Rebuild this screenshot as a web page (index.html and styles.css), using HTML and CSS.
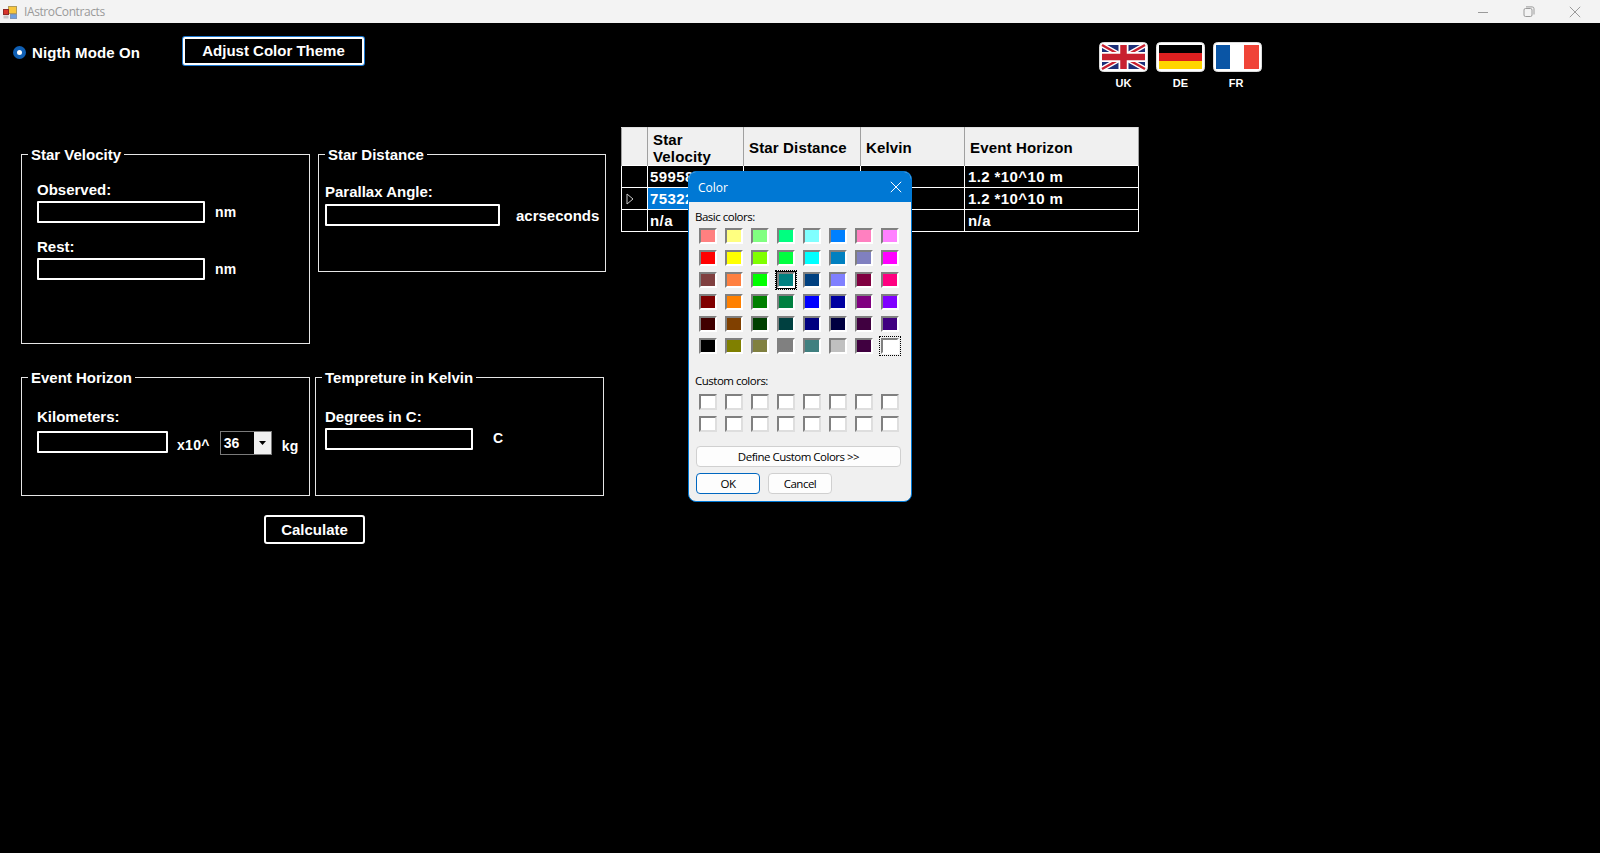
FILE: index.html
```html
<!DOCTYPE html>
<html lang="en">
<head>
<meta charset="utf-8">
<title>IAstroContracts</title>
<link rel="stylesheet" href="styles.css">
</head>
<body>
<div class="window">
  <header class="titlebar">
    <svg class="appicon" width="14" height="13" viewBox="0 0 14 13">
      <rect x="5.500" y="0.500" width="8" height="7" fill="#f7c63c" stroke="#b09a5a"/>
      <rect x="0.500" y="3.500" width="5" height="5" fill="#d8342b" stroke="#8f2a25"/>
      <rect x="7.500" y="8.500" width="6" height="4" fill="#6f9fe0" stroke="#7f96b8"/>
      <rect x="0.500" y="9.500" width="5" height="3" fill="#c8c8c8"/>
    </svg>
    <span class="apptitle">IAstroContracts</span>
    <div class="winctrls">
      <span class="winbtn"><svg width="12" height="12" viewBox="0 0 12 12"><path d="M1 6.500h10" stroke="#9a9a9a"/></svg></span>
      <span class="winbtn"><svg width="12" height="12" viewBox="0 0 12 12"><rect x="1" y="2.500" width="8" height="8" rx="1.500" fill="none" stroke="#9a9a9a"/><path d="M3 .9h6.200q1.800 0 1.800 1.800V8.500" fill="none" stroke="#9a9a9a"/></svg></span>
      <span class="winbtn"><svg width="12" height="12" viewBox="0 0 12 12"><path d="M.8.800l10.400 10.400M11.200.800L.8 11.200" stroke="#9a9a9a" fill="none"/></svg></span>
    </div>
  </header>

  <main class="client">
    <section class="left">
      <div class="toolbar">
        <label class="radio"><span class="radiodot"></span>Nigth Mode On</label>
        <button class="btn btn-theme" type="button">Adjust Color Theme</button>
      </div>

      <div class="grouprow row-a">
        <fieldset class="group g-velocity">
          <legend>Star Velocity</legend>
          <div class="fieldlabel">Observed:</div>
          <div class="fieldline"><span class="input w-168"></span><span class="unit u-nm">nm</span></div>
          <div class="fieldlabel second">Rest:</div>
          <div class="fieldline"><span class="input w-168"></span><span class="unit u-nm">nm</span></div>
        </fieldset>
        <fieldset class="group g-distance">
          <legend>Star Distance</legend>
          <div class="fieldlabel">Parallax Angle:</div>
          <div class="fieldline"><span class="input w-175"></span><span class="unit u-arc">acrseconds</span></div>
        </fieldset>
      </div>

      <div class="grouprow row-b">
        <fieldset class="group g-horizon">
          <legend>Event Horizon</legend>
          <div class="fieldlabel">Kilometers:</div>
          <div class="fieldline line-top"><span class="input w-131"></span><span class="unit u-x">x10^</span>
            <span class="combo"><span class="comboval">36</span><span class="comboarrow"><svg width="7" height="4" viewBox="0 0 7 4"><path d="M0 0h7L3.500 4z" fill="#000"/></svg></span></span>
            <span class="unit u-kg">kg</span></div>
        </fieldset>
        <fieldset class="group g-temp">
          <legend>Tempreture in Kelvin</legend>
          <div class="fieldlabel">Degrees in C:</div>
          <div class="fieldline"><span class="input w-148"></span><span class="unit u-c">C</span></div>
        </fieldset>
      </div>

      <div class="calcrow"><button class="btn btn-calc" type="button">Calculate</button></div>
    </section>

    <section class="right">
      <div class="flags">
        <figure class="flag">
          <svg class="flagimg" width="49" height="30" viewBox="0 0 49 30">
            <rect x=".5" y=".5" width="48" height="29" rx="4" fill="#fff" stroke="#ddd"/>
            <rect x="3" y="3" width="43" height="24" fill="#1d2f78"/>
            <path d="M3 3l43 24M46 3L3 27" stroke="#fff" stroke-width="5"/>
            <path d="M3 3l43 24M46 3L3 27" stroke="#c8202f" stroke-width="2.500"/>
            <path d="M24.500 3v24M3 15h43" stroke="#fff" stroke-width="10"/>
            <path d="M24.500 3v24M3 15h43" stroke="#c8202f" stroke-width="6.500"/>
          </svg>
          <figcaption>UK</figcaption>
        </figure>
        <figure class="flag">
          <svg class="flagimg" width="49" height="30" viewBox="0 0 49 30">
            <rect x=".5" y=".5" width="48" height="29" rx="4" fill="#fff" stroke="#ddd"/>
            <rect x="3" y="3" width="43" height="8" fill="#000"/>
            <rect x="3" y="11" width="43" height="8" fill="#dd2020"/>
            <rect x="3" y="19" width="43" height="8" fill="#ffd500"/>
          </svg>
          <figcaption>DE</figcaption>
        </figure>
        <figure class="flag">
          <svg class="flagimg" width="49" height="30" viewBox="0 0 49 30">
            <rect x=".5" y=".5" width="48" height="29" rx="4" fill="#fff" stroke="#ddd"/>
            <rect x="3" y="3" width="14" height="24" fill="#0a55a5"/>
            <rect x="31" y="3" width="15" height="24" fill="#f04438"/>
          </svg>
          <figcaption>FR</figcaption>
        </figure>
      </div>

      <table class="grid">
        <colgroup><col class="c0"><col class="c1"><col class="c2"><col class="c3"><col class="c4"></colgroup>
        <thead>
          <tr class="headrow"><th></th><th>Star Velocity</th><th>Star Distance</th><th>Kelvin</th><th>Event Horizon</th></tr>
        </thead>
        <tbody>
          <tr><td class="rowhead"></td><td>59958</td><td></td><td></td><td>1.2 *10^10 m</td></tr>
          <tr><td class="rowhead"><svg class="rowarrow" width="8" height="12" viewBox="0 0 8 12"><path d="M1 1l6 5-6 5z" fill="none" stroke="#c8c8c8"/></svg></td><td class="selected">75322</td><td></td><td></td><td>1.2 *10^10 m</td></tr>
          <tr><td class="rowhead"></td><td>n/a</td><td></td><td></td><td>n/a</td></tr>
        </tbody>
      </table>
    </section>
  </main>

  <div class="dialog">
    <div class="dlgtitle"><span>Color</span>
      <svg width="12" height="12" viewBox="0 0 12 12"><path d="M.8.800l10.400 10.400M11.200.800L.8 11.200" stroke="#fff" fill="none"/></svg>
    </div>
    <div class="dlgbody">
      <div class="dlglabel">Basic colors:</div>
      <div class="swatches">
        <span class="sw c-ff8080"></span><span class="sw c-ffff80"></span><span class="sw c-80ff80"></span><span class="sw c-00ff80"></span><span class="sw c-80ffff"></span><span class="sw c-0080ff"></span><span class="sw c-ff80c0"></span><span class="sw c-ff80ff"></span>
        <span class="sw c-ff0000"></span><span class="sw c-ffff00"></span><span class="sw c-80ff00"></span><span class="sw c-00ff40"></span><span class="sw c-00ffff"></span><span class="sw c-0080c0"></span><span class="sw c-8080c0"></span><span class="sw c-ff00ff"></span>
        <span class="sw c-804040"></span><span class="sw c-ff8040"></span><span class="sw c-00ff00"></span><span class="sw c-008080 sw-current"></span><span class="sw c-004080"></span><span class="sw c-8080ff"></span><span class="sw c-800040"></span><span class="sw c-ff0080"></span>
        <span class="sw c-800000"></span><span class="sw c-ff8000"></span><span class="sw c-008000"></span><span class="sw c-008040"></span><span class="sw c-0000ff"></span><span class="sw c-0000a0"></span><span class="sw c-800080"></span><span class="sw c-8000ff"></span>
        <span class="sw c-400000"></span><span class="sw c-804000"></span><span class="sw c-004000"></span><span class="sw c-004040"></span><span class="sw c-000080"></span><span class="sw c-000040"></span><span class="sw c-400040"></span><span class="sw c-400080"></span>
        <span class="sw c-000000"></span><span class="sw c-808000"></span><span class="sw c-808040"></span><span class="sw c-808080"></span><span class="sw c-408080"></span><span class="sw c-c0c0c0"></span><span class="sw c-400040"></span><span class="sw c-ffffff sw-focus"></span>
      </div>
      <div class="dlglabel custom">Custom colors:</div>
      <div class="swatches">
        <span class="sw sw-empty"></span><span class="sw sw-empty"></span><span class="sw sw-empty"></span><span class="sw sw-empty"></span><span class="sw sw-empty"></span><span class="sw sw-empty"></span><span class="sw sw-empty"></span><span class="sw sw-empty"></span>
        <span class="sw sw-empty"></span><span class="sw sw-empty"></span><span class="sw sw-empty"></span><span class="sw sw-empty"></span><span class="sw sw-empty"></span><span class="sw sw-empty"></span><span class="sw sw-empty"></span><span class="sw sw-empty"></span>
      </div>
      <button class="dlgbtn define" type="button">Define Custom Colors &gt;&gt;</button>
      <div class="dlgactions">
        <button class="dlgbtn ok" type="button">OK</button>
        <button class="dlgbtn cancel" type="button">Cancel</button>
      </div>
    </div>
  </div>
</div>
</body>
</html>
```
FILE: styles.css
```css
* { box-sizing: border-box; }
html, body { margin: 0; height: 100%; background: #000; overflow: hidden; }
body { font-family: "Liberation Sans", Arial, sans-serif; color: #fff; }
.window { position: relative; height: 853px; display: flex; flex-direction: column; }

.titlebar { height: 23px; background: #f3f3f3; display: flex; align-items: center; padding: 0 2px 0 3px; flex: none; }
.appicon { flex: none; margin-top: 1px; }
.apptitle { font: 12px "Open Sans", sans-serif; letter-spacing: -.4px; color: #9a9a9a; margin-left: 7px; }
.winctrls { margin-left: auto; display: flex; }
.winbtn { width: 46px; height: 23px; display: flex; align-items: center; justify-content: center; }

.client { display: flex; flex: 1; font-weight: 700; font-size: 15px; }
.left { width: 621px; flex: none; padding-left: 13px; }
.right { flex: 1; }

.toolbar { display: flex; align-items: center; height: 28px; margin-top: 14px; }
.radio { display: flex; align-items: center; width: 170px; font-size: 15px; letter-spacing: .1px; padding-top: 2px; }
.radiodot { width: 13px; height: 13px; border-radius: 50%; background: #fff; border: 4px solid #0f5fb4; margin-right: 6px; flex: none; }
.btn { background: #000; color: #fff; font: 700 15px "Liberation Sans", Arial, sans-serif; border-radius: 2px; padding: 0; }
.btn-theme { width: 181px; height: 28px; border: 2px solid #fff; box-shadow: 0 0 0 1px #1b78d0; padding-bottom: 2px; }

.grouprow { display: flex; align-items: flex-start; margin-left: 8px; }
.row-a { margin-top: 80px; gap: 8px; }
.row-b { margin-top: 24px; gap: 5px; }
.group { margin: 0; border: 1px solid #e6e6e6; padding: 0; min-width: 0; font-size: 15px; }
.group legend { margin-left: 6px; padding: 2px 3px 0; font-size: 15px; line-height: 16px; font-weight: 700; }
.fieldlabel, .fieldline { margin-left: 15px; }
.g-velocity { width: 289px; height: 199px; padding-top: 19px; }
.g-distance { width: 288px; height: 127px; padding-top: 21px; }
.g-horizon { width: 289px; height: 128px; padding-top: 23px; }
.g-temp { width: 289px; height: 128px; padding-top: 23px; }
.g-distance .fieldlabel, .g-distance .fieldline { margin-left: 6px; }
.g-temp .fieldlabel, .g-temp .fieldline { margin-left: 9px; }

.fieldlabel { line-height: 16px; height: 16px; }
.fieldlabel.second { margin-top: 16px; }
.fieldline { display: flex; align-items: center; margin-top: 3px; }
.g-distance .fieldline { margin-top: 4px; }
.g-temp .fieldline { margin-top: 3px; }
.fieldline.line-top { align-items: flex-start; margin-top: 6px; }
.input { display: block; height: 22px; border: 2px solid #fff; border-radius: 1px; flex: none; }
.w-168 { width: 168px; }
.w-175 { width: 175px; }
.w-131 { width: 131px; }
.w-148 { width: 148px; }
.unit { font-size: 14px; line-height: 16px; letter-spacing: .2px; }
.u-nm { margin-left: 10px; }
.u-arc { margin-left: 16px; font-size: 15px; letter-spacing: 0; padding-top: 2px; }
.u-x { margin-left: 9px; letter-spacing: .3px; padding-top: 6px; }
.u-kg { margin-left: 10px; padding-top: 7px; }
.u-c { margin-left: 20px; padding-bottom: 2px; }
.combo { margin-left: 10px; width: 52px; height: 24px; border: 1px solid #7a7a7a; display: flex; }
.comboval { flex: 1; font-size: 14px; font-weight: 700; padding-left: 3px; line-height: 22px; }
.comboarrow { width: 17px; background: #f0f0f0; display: flex; align-items: center; justify-content: center; }

.calcrow { margin: 19px 0 0 251px; }
.btn-calc { width: 101px; height: 29px; border: 2px solid #fff; border-radius: 3px; }

.flags { display: flex; gap: 8px; padding: 19px 0 0 478px; height: 104px; }
.flag { margin: 0; width: 49px; text-align: center; }
.flag:last-child figcaption { padding-right: 3px; }
.flagimg { display: block; }
figcaption { font-size: 11px; line-height: 13px; margin-top: 5px; }

.grid { border-collapse: collapse; table-layout: fixed; width: 517px; font-size: 15px; font-weight: 700; }
.c0 { width: 26px; }
.c1 { width: 96px; }
.c2 { width: 117px; }
.c3 { width: 104px; }
.c4 { width: 174px; }
.grid th { background: #f0f0f0; color: #000; text-align: left; font-size: 15px; line-height: 17px; letter-spacing: .15px; height: 38px; padding: 2px 5px 0; border: 1px solid #a0a0a0; border-top-color: #e0e0e0; border-bottom: 0; }
.grid td { border: 1px solid #fff; height: 22px; padding: 0 2px; white-space: nowrap; letter-spacing: .4px; }
.grid td:last-child { padding-left: 3px; }
.grid td.selected { background: #0078d7; }
.grid td.rowhead { padding: 0 0 0 4px; }
.rowarrow { display: block; }

.dialog { position: absolute; left: 688px; top: 171px; width: 224px; height: 331px; background: #f0f0f0; border: 1px solid #0078d4; border-radius: 8px; overflow: hidden; color: #000; font: 400 12px "Open Sans", sans-serif; }
.dlgtitle { height: 30px; background: #0078d4; color: #fff; display: flex; align-items: center; justify-content: space-between; padding: 0 9px 0 9px; font-size: 12px; }
.dlgbody { padding: 0 10px; }
.dlglabel { font-size: 11.500px; line-height: 14px; letter-spacing: -.5px; margin: 8px 0 4px -4px; }
.dlglabel.custom { margin: 20px 0 6px -4px; }
.swatches { display: grid; grid-template-columns: repeat(8, 18px); grid-auto-rows: 16px; column-gap: 8px; row-gap: 6px; }
.sw { display: block; border: 2px solid; border-color: #808080 #fff #fff #808080; }
.sw-empty { background: #fff; border-color: #808080 #dedede #dedede #808080; }
.sw-current { box-shadow: 0 0 0 1px #000; outline: 1px dotted #000; outline-offset: 1px; }
.sw-focus { outline: 1px dotted #000; outline-offset: 1px; }
.c-ff8080 { background: #ff8080; } .c-ffff80 { background: #ffff80; } .c-80ff80 { background: #80ff80; } .c-00ff80 { background: #00ff80; }
.c-80ffff { background: #80ffff; } .c-0080ff { background: #0080ff; } .c-ff80c0 { background: #ff80c0; } .c-ff80ff { background: #ff80ff; }
.c-ff0000 { background: #ff0000; } .c-ffff00 { background: #ffff00; } .c-80ff00 { background: #80ff00; } .c-00ff40 { background: #00ff40; }
.c-00ffff { background: #00ffff; } .c-0080c0 { background: #0080c0; } .c-8080c0 { background: #8080c0; } .c-ff00ff { background: #ff00ff; }
.c-804040 { background: #804040; } .c-ff8040 { background: #ff8040; } .c-00ff00 { background: #00ff00; } .c-008080 { background: #008080; }
.c-004080 { background: #004080; } .c-8080ff { background: #8080ff; } .c-800040 { background: #800040; } .c-ff0080 { background: #ff0080; }
.c-800000 { background: #800000; } .c-ff8000 { background: #ff8000; } .c-008000 { background: #008000; } .c-008040 { background: #008040; }
.c-0000ff { background: #0000ff; } .c-0000a0 { background: #0000a0; } .c-800080 { background: #800080; } .c-8000ff { background: #8000ff; }
.c-400000 { background: #400000; } .c-804000 { background: #804000; } .c-004000 { background: #004000; } .c-004040 { background: #004040; }
.c-000080 { background: #000080; } .c-000040 { background: #000040; } .c-400040 { background: #400040; } .c-400080 { background: #400080; }
.c-000000 { background: #000000; } .c-808000 { background: #808000; } .c-808040 { background: #808040; } .c-808080 { background: #808080; }
.c-408080 { background: #408080; } .c-c0c0c0 { background: #c0c0c0; } .c-ffffff { background: #ffffff; }

.dlgbtn { font: 400 11.500px "Open Sans", sans-serif; letter-spacing: -.5px; color: #000; background: #fdfdfd; border: 1px solid #d0d0d0; border-radius: 4px; padding: 0; display: block; }
.define { width: 205px; height: 21px; margin: 14px 0 0 -3px; }
.dlgactions { display: flex; gap: 8px; margin: 6px 0 0 -3px; }
.ok { width: 64px; height: 21px; border-color: #0067c0; }
.cancel { width: 64px; height: 21px; }
```
